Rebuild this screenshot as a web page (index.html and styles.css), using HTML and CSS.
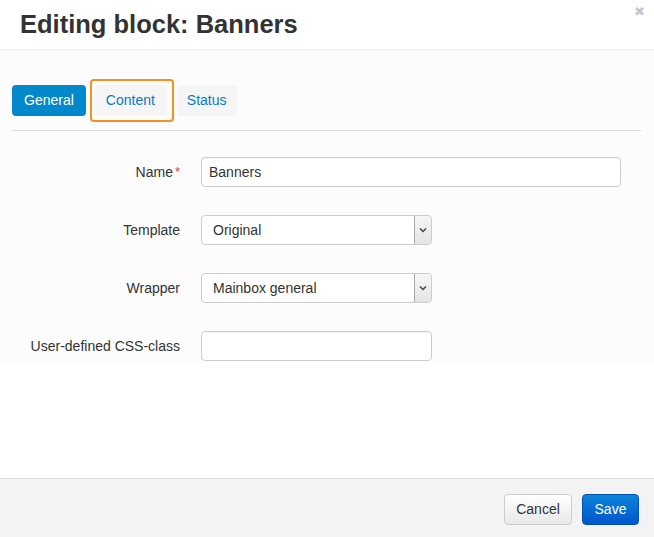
FILE: index.html
```html
<!DOCTYPE html>
<html>
<head>
<meta charset="utf-8">
<link rel="stylesheet" href="styles.css">
</head>
<body>
<div class="modal">
  <div class="modal-header">
    <h3 class="title">Editing block: Banners</h3>
    <span class="close">&#10006;</span>
  </div>
  <div class="modal-body">
    <div class="tabs">
      <span class="tab active">General</span>
      <span class="tab focused">Content</span>
      <span class="tab status">Status</span>
    </div>
    <div class="form">
      <div class="row">
        <label class="lbl">Name<span class="req">*</span></label>
        <div class="input wide">Banners</div>
      </div>
      <div class="row">
        <label class="lbl">Template</label>
        <div class="select"><span class="val">Original</span><span class="arrow"><svg width="8" height="6" viewBox="0 0 8 6"><path d="M1 1.5 L4 4.5 L7 1.5" fill="none" stroke="#444" stroke-width="1.5"/></svg></span></div>
      </div>
      <div class="row">
        <label class="lbl">Wrapper</label>
        <div class="select"><span class="val">Mainbox general</span><span class="arrow"><svg width="8" height="6" viewBox="0 0 8 6"><path d="M1 1.5 L4 4.5 L7 1.5" fill="none" stroke="#444" stroke-width="1.5"/></svg></span></div>
      </div>
      <div class="row">
        <label class="lbl">User-defined CSS-class</label>
        <div class="input narrow"></div>
      </div>
    </div>
  </div>
  <div class="modal-footer">
    <span class="btn cancel">Cancel</span>
    <span class="btn save">Save</span>
  </div>
</div>
</body>
</html>
```
FILE: styles.css
```css
html, body {
  margin: 0;
  padding: 0;
  background: #fff;
}
body {
  font-family: "Liberation Sans", Arial, sans-serif;
  font-size: 14px;
  color: #333;
  width: 654px;
  height: 537px;
  overflow: hidden;
}
.modal {
  display: flex;
  flex-direction: column;
  height: 537px;
}
.modal-header {
  height: 50px;
  border-bottom: 1px solid #eee;
  position: relative;
  box-sizing: border-box;
  flex: none;
}
.title {
  margin: 0;
  padding: 9px 0 0 20px;
  font-size: 25.5px;
  line-height: 30px;
  font-weight: bold;
  color: #333;
}
.close {
  position: absolute;
  right: 9px;
  top: 4px;
  font-size: 13px;
  color: #c8c8c8;
}
.modal-body {
  flex: 1;
  padding: 35px 13px 0 12px;
  background: linear-gradient(#fcfcfc, #fcfcfc) no-repeat 0 0 / 100% 312px;
}
.tabs {
  display: flex;
  align-items: center;
  border-bottom: 1px solid #ddd;
  padding-bottom: 14px;
}
.tab {
  display: inline-block;
  height: 31px;
  line-height: 31px;
  padding: 0 12px;
  border-radius: 4px;
  background: #f5f5f5;
  color: #0b7ac6;
  font-size: 14px;
}
.tab.active {
  background: #0388cc;
  color: #fff;
  padding: 0 12px;
}
.tab.focused {
  position: relative;
  margin-left: 8px;
  padding: 0 12px;
}
.tab.focused::after {
  content: "";
  position: absolute;
  left: -4px;
  right: -7px;
  top: -6px;
  bottom: -6px;
  border: 2px solid #f7901e;
  border-radius: 4px;
}
.tab.status {
  margin-left: 10px;
  padding: 0 10px;
}
.form {
  padding-top: 26px;
  display: flex;
  flex-direction: column;
  gap: 28px;
}
.row {
  display: flex;
  align-items: center;
  height: 30px;
}
.lbl {
  width: 168px;
  text-align: right;
  padding-right: 21px;
  font-size: 14px;
  color: #333;
  flex: none;
}
.req {
  color: #e33;
  margin-left: 2px;
  font-size: 13px;
  vertical-align: 1px;
}
.input {
  height: 30px;
  box-sizing: border-box;
  border: 1px solid #ccc;
  border-radius: 4px;
  background: #fff;
  padding: 0 7px;
  line-height: 28px;
  font-size: 14px;
  color: #333;
  box-shadow: inset 0 1px 1px rgba(0,0,0,0.04);
}
.input.wide { width: 420px; }
.input.narrow { width: 231px; }
.select {
  width: 231px;
  height: 30px;
  box-sizing: border-box;
  border: 1px solid #ccc;
  border-radius: 4px;
  background: #fff;
  display: flex;
  align-items: stretch;
  overflow: hidden;
}
.select .val {
  flex: 1;
  padding-left: 11px;
  line-height: 28px;
  font-size: 14px;
  color: #333;
}
.select .arrow {
  width: 16px;
  border-left: 1px solid #aaa;
  background: linear-gradient(#f6f6f6, #e4e4e4);
  display: flex;
  align-items: center;
  justify-content: center;
  border-radius: 0 3px 3px 0;
}
.modal-footer {
  flex: none;
  height: 59px;
  box-sizing: border-box;
  border-top: 1px solid #ddd;
  background: #f3f3f3;
  display: flex;
  justify-content: flex-end;
  align-items: flex-start;
  gap: 10px;
  padding: 15px 15px 0 0;
}
.btn {
  display: inline-block;
  height: 31px;
  box-sizing: border-box;
  line-height: 29px;
  border-radius: 4px;
  font-size: 14px;
  text-align: center;
}
.btn.cancel {
  border: 1px solid #ccc;
  background: linear-gradient(#fff, #e8e8e8);
  color: #333;
  width: 68px;
}
.btn.save {
  border: 1px solid #0050b3;
  background: linear-gradient(#0a85db, #0055cc);
  color: #fff;
  width: 57px;
}
```
